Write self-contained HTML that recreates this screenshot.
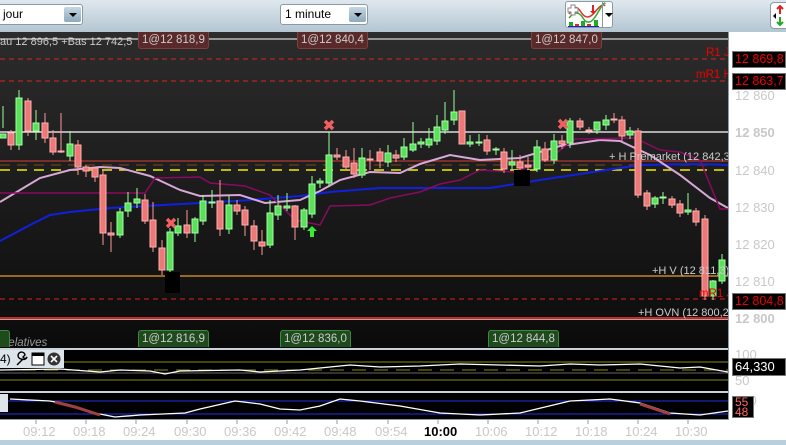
<!DOCTYPE html>
<html><head><meta charset="utf-8"><style>
*{margin:0;padding:0;box-sizing:border-box}
body{width:786px;height:445px;overflow:hidden;background:#fff;font-family:"Liberation Sans",sans-serif;position:relative}
.a{position:absolute;white-space:nowrap}
.tb{left:0;top:0;width:786px;height:32px;background:linear-gradient(#dfe8ee,#b4c6d2)}
.dd{background:#fff;border:1px solid #8a9aa6;border-radius:3px;height:21px;top:4px;font-size:12px;line-height:19px;padding-left:4px;color:#000}
.btn{top:2px;right:1px;width:17px;height:15px;background:linear-gradient(#c4d6e2,#8eaabc);border-radius:2px}
.btn:after{content:"";position:absolute;left:5px;top:6px;border:4px solid transparent;border-top:4px solid #000;border-bottom:0}
.lb{font-size:11.5px;color:#ccc;height:17px;line-height:16px;padding:0 3px;border-radius:0 0 3px 3px}
.rl{background:#5a2a2a;border:1px solid #7a4040;border-top:0}
.gl{background:#1e4a1e;border:1px solid #3a8a3a;border-bottom:0;border-radius:3px 3px 0 0}
.ax{font-size:13px;color:#c8c8c8;left:735px}
.bx{left:732px;width:54px;height:17px;background:#000;border:1px solid #777;color:#e00;font-size:12.5px;line-height:15px;padding-left:2px;overflow:hidden}
.t{font-size:13px;color:#c8c8c8;top:424px}
</style></head><body>
<div class="a tb"></div>
<div class="a dd" style="left:-2px;width:85px">jour<div class="a btn"></div></div>
<div class="a dd" style="left:280px;width:88px">1 minute<div class="a btn"></div></div>
<div class="a" style="left:565px;top:1px;width:48px;height:27px;background:#fff;border:1px solid #8a9aa6;border-radius:3px">
<svg width="48" height="27"><path d="M3 12 q6-12 12-2 t14 0 t10-6" stroke="#d33" fill="none" stroke-width="1.5"/><path d="M3 16 q8-10 14 0 t14-4 t8-10" stroke="#3a3" fill="none" stroke-width="1.5"/><rect x="3" y="20" width="4" height="4" fill="#2a2"/><rect x="9" y="22" width="4" height="2" fill="#c33"/><rect x="15" y="19" width="4" height="5" fill="#2a2"/><rect x="21" y="22" width="4" height="2" fill="#c33"/><rect x="28" y="18" width="4" height="6" fill="#2a2"/><rect x="2" y="24" width="31" height="1" fill="#22c"/><path d="M5 3h4v3h3v4h-3v3h-4v-3h-3v-4h3z" fill="#fff" stroke="#888"/><path d="M26 3v6h-2l3 3 3-3h-2v-6z" fill="#d22"/></svg>
<div class="a" style="left:36px;top:0;width:1px;height:25px;background:#8a9aa6"></div><div class="a" style="left:39px;top:11px;border:4px solid transparent;border-top-color:#000"></div></div>
<div class="a" style="left:770px;top:2px;width:20px;height:27px;background:#fff;border:1px solid #8a9aa6;border-radius:4px"><svg width="20" height="27"><path d="M9 3v8M6 6l3-3 3 3" stroke="#d22" stroke-width="2" fill="none"/><path d="M9 14v8M6 19l3 3 3-3" stroke="#2a2" stroke-width="2" fill="none"/><path d="M2 13l3-3v6z" fill="#000"/></svg></div>

<div class="a" style="left:0;top:32px;width:728px;height:316px;background:linear-gradient(#2c2c2c,#0e0e0e 92%,#0a0a0a)"></div>
<div class="a" style="left:728px;top:32px;width:1px;height:388px;background:#8a9aa6"></div>
<svg class="a" style="left:0;top:32px" width="728" height="316" viewBox="0 32 728 316">
<line x1="0" y1="39" x2="728" y2="39" stroke="#fff"/>
<line x1="0" y1="59" x2="728" y2="59" stroke="#d22" stroke-dasharray="5,4"/>
<line x1="0" y1="81" x2="728" y2="81" stroke="#d22" stroke-dasharray="5,4"/>
<line x1="0" y1="132" x2="728" y2="132" stroke="#fff" stroke-width="1.3"/>
<line x1="0" y1="161" x2="728" y2="161" stroke="#b03a30" stroke-width="1.3"/>
<line x1="0" y1="165" x2="728" y2="165" stroke="#7a4a20" stroke-dasharray="10,7"/>
<line x1="0" y1="170" x2="728" y2="170" stroke="#ee0" stroke-width="1.5" stroke-dasharray="10,7"/>
<line x1="0" y1="276" x2="728" y2="276" stroke="#e8a020" stroke-width="1.3"/>
<line x1="0" y1="299" x2="728" y2="299" stroke="#d22" stroke-dasharray="5,4"/>
<line x1="0" y1="318" x2="728" y2="318" stroke="#f33" stroke-width="1.5"/>
<line x1="0" y1="319.5" x2="728" y2="319.5" stroke="#fcc" stroke-width="0.8"/>
<path d="M0 241 L30 225 L50 215 L70 212 L110 208 L200 203 L250 200 L300 196 L330 192 L380 188 L440 188 L490 188 L540 180 L600 171 L640 165 L700 164 L728 165" stroke="#1020e0" stroke-width="2" fill="none"/>
<path d="M0 202 L20 190 L40 178 L70 170 L100 167 L120 168 L150 176 L180 190 L200 196 L240 195 L265 203 L300 200 L320 191 L340 180 L370 172 L400 173 L420 164 L450 155 L480 160 L520 158 L560 146 L600 140 L620 141 L650 155 L680 175 L710 198 L728 208" stroke="#d8a8d8" stroke-width="2" fill="none"/>
<path d="M0 193 L145 193 L155 178 L200 177 L210 183 L245 186 L270 195 L295 220 L320 225 L330 206 L370 205 L390 198 L420 192 L440 184 L460 180 L480 170 L515 172 L535 164 L555 154 L575 139 L635 138 L660 150 L680 152 L700 160 L720 209 L728 209" stroke="#8a0a60" stroke-width="1.5" fill="none"/>
<g stroke="#9f9" stroke-width="1">
<path d="M3 106v22M19 90v60M36 110v30M70 131v30M120 208v30M128 192v25M137 188v20M170 228v44M178 218v18M195 217v25M203 195v30M212 190v18M229 196v38M270 200v48M278 195v25M287 193v18M304 208v22M312 176v42M320 178v10M329 132v55M362 148v30M388 145v22M404 138v22M413 122v30M421 138v10M429 128v20M437 115v30M445 102v32M454 90v35M470 135v12M479 134v12M496 147v8M512 150v20M537 140v32M554 134v30M570 118v30M597 122v12M606 115v15M630 127v12M655 196v12M663 192v12M688 193v22M713 280v20M722 254v30"/>
</g>
<g stroke="#f99" stroke-width="1">
<path d="M11 130v20M28 98v38M45 113v30M53 130v25M61 113v40M78 140v35M86 165v12M95 167v15M103 170v75M111 222v30M145 194v30M153 202v50M162 240v35M187 210v28M220 180v56M237 200v15M245 206v30M254 220v30M262 230v25M295 205v35M337 148v12M346 150v20M354 148v30M370 150v20M380 148v20M396 150v12M487 135v20M504 148v25M520 155v15M528 157v14M545 142v20M562 135v14M580 118v12M589 127v7M614 113v10M622 116v25M638 128v70M647 190v20M672 196v12M680 200v17M696 208v18M705 215v85"/>
</g>
<g fill="#5ae05a" stroke="#a0ffa0" stroke-width="1">
<rect x="0" y="134" width="6" height="4"/><rect x="16" y="98" width="6" height="47"/><rect x="33" y="123" width="6" height="8"/><rect x="67" y="144" width="6" height="12"/><rect x="117" y="212" width="6" height="23"/><rect x="125" y="203" width="6" height="8"/><rect x="134" y="199" width="6" height="4"/><rect x="167" y="232" width="6" height="38"/><rect x="175" y="226" width="6" height="7"/><rect x="192" y="219" width="6" height="14"/><rect x="200" y="201" width="6" height="20"/><rect x="209" y="202" width="6" height="1"/><rect x="226" y="205" width="6" height="24"/><rect x="267" y="213" width="6" height="32"/><rect x="275" y="206" width="6" height="9"/><rect x="284" y="206" width="6" height="2"/><rect x="301" y="210" width="6" height="17"/><rect x="309" y="184" width="6" height="30"/><rect x="317" y="181" width="6" height="2"/><rect x="326" y="155" width="6" height="28"/><rect x="359" y="158" width="6" height="17"/><rect x="385" y="153" width="6" height="9"/><rect x="401" y="147" width="6" height="10"/><rect x="410" y="144" width="6" height="6"/><rect x="418" y="142" width="6" height="2"/><rect x="426" y="139" width="6" height="6"/><rect x="434" y="127" width="6" height="14"/><rect x="442" y="121" width="6" height="9"/><rect x="451" y="112" width="6" height="8"/><rect x="467" y="142" width="6" height="2"/><rect x="476" y="142" width="6" height="1"/><rect x="493" y="149" width="6" height="1"/><rect x="509" y="162" width="6" height="3"/><rect x="534" y="147" width="6" height="22"/><rect x="551" y="141" width="6" height="19"/><rect x="567" y="121" width="6" height="22"/><rect x="594" y="122" width="6" height="8"/><rect x="603" y="120" width="6" height="5"/><rect x="627" y="131" width="6" height="4"/><rect x="652" y="198" width="6" height="6"/><rect x="660" y="197" width="6" height="1"/><rect x="685" y="210" width="6" height="2"/><rect x="710" y="281" width="6" height="15"/><rect x="719" y="260" width="6" height="21"/>
</g>
<g fill="#ec7878" stroke="#ffb0b0" stroke-width="1">
<rect x="8" y="133" width="6" height="12"/><rect x="25" y="101" width="6" height="30"/><rect x="42" y="123" width="6" height="15"/><rect x="50" y="138" width="6" height="14"/><rect x="58" y="151" width="6" height="1"/><rect x="75" y="145" width="6" height="22"/><rect x="83" y="167" width="6" height="4"/><rect x="92" y="168" width="6" height="9"/><rect x="100" y="175" width="6" height="58"/><rect x="108" y="233" width="6" height="2"/><rect x="142" y="200" width="6" height="21"/><rect x="150" y="220" width="6" height="27"/><rect x="159" y="248" width="6" height="22"/><rect x="184" y="225" width="6" height="8"/><rect x="217" y="201" width="6" height="28"/><rect x="234" y="205" width="6" height="6"/><rect x="242" y="210" width="6" height="15"/><rect x="251" y="226" width="6" height="15"/><rect x="259" y="242" width="6" height="4"/><rect x="292" y="206" width="6" height="21"/><rect x="334" y="155" width="6" height="2"/><rect x="343" y="157" width="6" height="10"/><rect x="351" y="163" width="6" height="11"/><rect x="367" y="159" width="6" height="1"/><rect x="377" y="152" width="6" height="9"/><rect x="393" y="155" width="6" height="3"/><rect x="459" y="111" width="6" height="33"/><rect x="484" y="140" width="6" height="11"/><rect x="501" y="152" width="6" height="17"/><rect x="517" y="162" width="6" height="6"/><rect x="525" y="165" width="6" height="2"/><rect x="542" y="149" width="6" height="11"/><rect x="559" y="141" width="6" height="3"/><rect x="577" y="121" width="6" height="6"/><rect x="586" y="130" width="6" height="1"/><rect x="611" y="119" width="6" height="1"/><rect x="619" y="120" width="6" height="16"/><rect x="635" y="131" width="6" height="64"/><rect x="644" y="193" width="6" height="13"/><rect x="669" y="199" width="6" height="6"/><rect x="677" y="204" width="6" height="9"/><rect x="693" y="211" width="6" height="11"/><rect x="702" y="219" width="6" height="77"/>
</g>
<rect x="165" y="272" width="15" height="21" fill="#000"/>
<rect x="514" y="170" width="16" height="16" fill="#000"/>
<g stroke="#f06060" stroke-width="3.5"><path d="M325 121l8 8M333 121l-8 8M167 219l8 8M175 219l-8 8M559 120l8 8M567 120l-8 8"/></g>
<path d="M312 226l-5 5h3v6h4v-6h3z" fill="#3e3"/>
<text x="706" y="56" fill="#e00" font-size="11.5">R1 J</text>
<text x="696" y="78" fill="#e00" font-size="11.5">mR1 H</text>
<text x="699" y="297" fill="#e00" font-size="11.5">mR1 J</text>
<text x="609" y="160" fill="#ccc" font-size="11">+ H Premarket (12 842,3)</text>
<text x="652" y="274" fill="#ccc" font-size="11">+H V (12 811,3)</text>
<text x="638" y="316" fill="#ccc" font-size="11">+H OVN (12 800,2)</text>
<text x="0" y="45" fill="#ccc" font-size="11">au 12 896,5 +Bas 12 742,5</text>
<text x="0" y="346" fill="#999" font-size="11.5" font-style="italic">Relatives</text>
</svg>
<div class="a lb rl" style="left:138px;top:32px">1@12 818,9</div>
<div class="a lb rl" style="left:297px;top:32px">1@12 840,4</div>
<div class="a lb rl" style="left:531px;top:32px">1@12 847,0</div>
<div class="a lb gl" style="left:138px;top:330px">1@12 816,9</div>
<div class="a lb gl" style="left:280px;top:330px">1@12 836,0</div>
<div class="a lb gl" style="left:488px;top:330px">1@12 844,8</div>
<div class="a lb gl" style="left:-2px;top:330px;width:12px"></div>

<div class="a ax" style="top:88px">12 860</div>
<div class="a ax" style="top:125px;font-weight:bold">12 850</div>
<div class="a ax" style="top:163px">12 840</div>
<div class="a ax" style="top:200px">12 830</div>
<div class="a ax" style="top:237px">12 820</div>
<div class="a ax" style="top:274px">12 810</div>
<div class="a ax" style="top:311px;font-weight:bold">12 800</div>
<div class="a bx" style="top:51px">12 869,8</div>
<div class="a bx" style="top:73px">12 863,7</div>
<div class="a bx" style="top:293px">12 804,8</div>

<div class="a" style="left:0;top:348px;width:728px;height:2px;background:#c8d4dc"></div>
<div class="a" style="left:0;top:350px;width:728px;height:41px;background:#000"></div>
<svg class="a" style="left:0;top:350px" width="728" height="41">
<line x1="0" y1="12" x2="728" y2="12" stroke="#8a8a10"/><line x1="0" y1="20" x2="728" y2="20" stroke="#8a8a10" stroke-dasharray="14,8"/><line x1="0" y1="23" x2="728" y2="23" stroke="#666"/><line x1="0" y1="30" x2="728" y2="30" stroke="#8a8a10"/>
<path d="M0 20 L60 19 L100 22 L120 20 L150 21 L165 24 L180 21 L240 20 L260 22 L300 20 L330 17 L350 15 L380 17 L420 16 L460 14 L500 15 L540 16 L570 14 L600 15 L640 14 L680 18 L700 17 L728 22" stroke="#fff" stroke-width="1.3" fill="none"/>
</svg>
<div class="a" style="left:0;top:350px;width:64px;height:18px;background:#dde5eb;font-size:12px;line-height:18px">4)
<svg class="a" style="left:14px;top:1px" width="50" height="16"><path d="M3 14l6-6M8 8a3.5 3.5 0 1 1 3-4l-2 2 2 2 2-2a3.5 3.5 0 0 1-5 2" stroke="#000" fill="none" stroke-width="1.4"/><rect x="18" y="2" width="12" height="12" fill="#fff" stroke="#000"/><rect x="18" y="2" width="12" height="3" fill="#000"/><circle cx="40" cy="8" r="6.5" fill="#333"/><path d="M37 5l6 6M43 5l-6 6" stroke="#fff" stroke-width="1.6"/></svg></div>
<div class="a ax" style="top:347px;font-size:13px">100</div>
<div class="a ax" style="top:373px;font-size:13px">50</div>
<div class="a bx" style="top:358px;color:#fff;font-size:13px;height:18px;line-height:16px">64,330</div>

<div class="a" style="left:0;top:391px;width:728px;height:2px;background:#c8d4dc"></div>
<div class="a" style="left:0;top:393px;width:728px;height:26px;background:#000"></div>
<svg class="a" style="left:0;top:393px" width="728" height="26">
<line x1="0" y1="8" x2="728" y2="8" stroke="#2030e0"/><line x1="0" y1="21" x2="728" y2="21" stroke="#2030e0"/>
<path d="M10 6 L50 8 L70 12 L95 20 L115 24 L140 22 L185 20 L200 16 L235 8 L260 11 L280 16 L300 17 L320 13 L340 6 L360 8 L400 13 L440 20 L480 22 L520 20 L570 8 L610 6 L640 10 L670 20 L700 22 L728 18" stroke="#fff" stroke-width="1.3" fill="none"/>
<path d="M55 9 L75 14 L100 22" stroke="#a04040" stroke-width="3" fill="none"/><path d="M640 11 L670 21" stroke="#a04040" stroke-width="3" fill="none"/>
</svg>
<div class="a" style="left:0;top:394px;width:8px;height:18px;background:#dde5eb"></div>
<div class="a ax" style="top:393px;font-size:13px">100</div>
<div class="a bx" style="top:396px;height:22px;color:#f66;font-size:12px;line-height:10px;width:22px;white-space:normal">55<br>48</div>

<div class="a" style="left:0;top:419px;width:728px;height:1px;background:#8a9aa6"></div>
<svg class="a" style="left:0;top:419px" width="728" height="6"><path d="M36 0v5M86 0v5M136 0v5M187 0v5M237 0v5M287 0v5M337 0v5M388 0v5M438 0v5M488 0v5M538 0v5M588 0v5M638 0v5M688 0v5" stroke="#999"/></svg>
<div class="a t" style="left:23px">09:12</div><div class="a t" style="left:73px">09:18</div><div class="a t" style="left:123px">09:24</div><div class="a t" style="left:174px">09:30</div><div class="a t" style="left:224px">09:36</div><div class="a t" style="left:274px">09:42</div><div class="a t" style="left:324px">09:48</div><div class="a t" style="left:375px">09:54</div><div class="a t" style="left:424px;color:#000;font-weight:bold">10:00</div><div class="a t" style="left:475px">10:06</div><div class="a t" style="left:525px">10:12</div><div class="a t" style="left:575px">10:18</div><div class="a t" style="left:625px">10:24</div><div class="a t" style="left:675px">10:30</div>
<div class="a" style="left:0;top:440px;width:786px;height:5px;background:#b8d0de"></div>
</body></html>
